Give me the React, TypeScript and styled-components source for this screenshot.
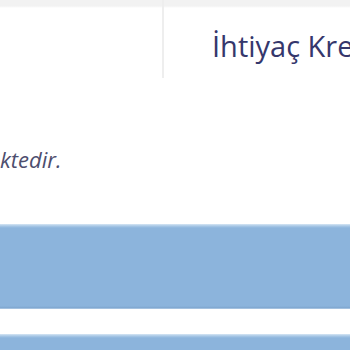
import React from "react";
import styled, { createGlobalStyle } from "styled-components";

const Global = createGlobalStyle`
  html, body { margin: 0; padding: 0; background: #ffffff; }
  body { font-family: "Open Sans", "Noto Sans", sans-serif; overflow: hidden; }
`;

const Page = styled.div`
  width: 350px;
  height: 350px;
  display: flex;
  flex-direction: column;
  overflow: hidden;
  background: #ffffff;
  & > * { flex-shrink: 0; }
`;

const Header = styled.div`
  display: grid;
  grid-template-columns: 164px 1fr;
  height: 78px;
  background: linear-gradient(#f2f2f2 0, #f2f2f2 6px, #ffffff 8px);
`;

const HeaderCell = styled.div<{ $divider?: boolean }>`
  display: flex;
  align-items: flex-start;
  border-right: ${(p) => (p.$divider ? "2px solid #eeeeee" : "none")};
  overflow: hidden;
`;

const Title = styled.h1`
  margin: 29px 0 0 48px;
  font-size: 29px;
  font-weight: 400;
  color: #35376c;
  white-space: nowrap;
  line-height: 34px;
`;

const Intro = styled.p`
  margin: 68px 0 0 0;
  font-style: italic;
  font-size: 22px;
  line-height: 26px;
  color: #4d4e6e;
  white-space: nowrap;
`;

const Band = styled.div<{ $h: number }>`
  height: ${(p) => p.$h}px;
  background: linear-gradient(#d6e6f4 0, #a9c8e6 2px, #8cb4dc 4px, #8cb4dc calc(100% - 3px), #7fa6cf calc(100% - 1px), #c9dcef 100%);
`;

const Gap = styled.div<{ $h: number }>`
  height: ${(p) => p.$h}px;
  background: #ffffff;
`;

export default function App() {
  return (
    <>
      <Global />
      <Page>
        <Header>
          <HeaderCell $divider />
          <HeaderCell>
            <Title>İhtiyaç Kredisi</Title>
          </HeaderCell>
        </Header>
        <Intro>ktedir.</Intro>
        <Gap $h={52} />
        <Band $h={85} />
        <Gap $h={25} />
        <Band $h={40} />
      </Page>
    </>
  );
}
